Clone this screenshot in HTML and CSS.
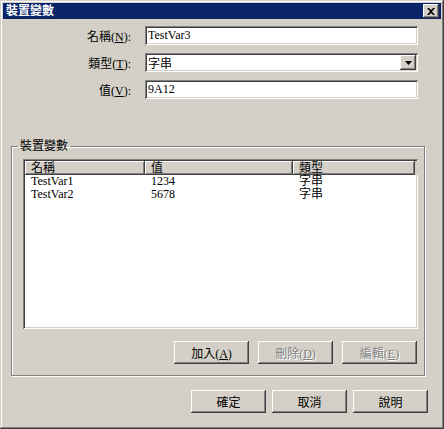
FILE: index.html
```html
<!DOCTYPE html>
<html lang="zh-Hant">
<head>
    <meta charset="UTF-8">
    <title>裝置變數</title>
    <link rel="stylesheet" href="styles.css">
</head>
<body>

    <div class="window">
        <!-- Title bar -->
        <div class="titlebar">
            <span class="title">裝置變數</span>
            <span class="close-btn">
                <svg width="8" height="7" viewBox="0 0 8 7">
                    <path d="M0 0h2l2 2 2-2h2L5 3.5 8 7H6L4 5 2 7H0l3-3.5z" fill="#000"/>
                </svg>
            </span>
        </div>

        <!-- Input fields -->
        <div class="form">
            <label class="field-label">名稱(<u>N</u>):</label>
            <input class="textbox" type="text" value="TestVar3">

            <label class="field-label">類型(<u>T</u>):</label>
            <div class="combo">
                <span class="combo-text">字串</span>
                <span class="combo-btn">
                    <svg width="7" height="4" viewBox="0 0 7 4">
                        <path d="M0 0h7L3.5 4z" fill="#000"/>
                    </svg>
                </span>
            </div>

            <label class="field-label">值(<u>V</u>):</label>
            <input class="textbox" type="text" value="9A12">
        </div>

        <!-- Variable list -->
        <fieldset class="group">
            <legend>裝置變數</legend>
            <div class="listview">
                <div class="lv-header">
                    <span>名稱</span>
                    <span>值</span>
                    <span>類型</span>
                    <span class="lv-filler"></span>
                </div>
                <div class="lv-row">
                    <span>TestVar1</span>
                    <span>1234</span>
                    <span>字串</span>
                </div>
                <div class="lv-row">
                    <span>TestVar2</span>
                    <span>5678</span>
                    <span>字串</span>
                </div>
            </div>
            <div class="group-buttons">
                <button class="btn">加入(<u>A</u>)</button>
                <button class="btn" disabled>刪除(<u>D</u>)</button>
                <button class="btn" disabled>編輯(<u>E</u>)</button>
            </div>
        </fieldset>

        <!-- Dialog buttons -->
        <div class="dialog-buttons">
            <button class="btn">確定</button>
            <button class="btn">取消</button>
            <button class="btn">說明</button>
        </div>
    </div>

</body>
</html>
```

FILE: styles.css
```css
/* Reset */
* {
    box-sizing: border-box;
}

body {
    margin: 0;
    background: #d4d0c8;
    font: 12px "Liberation Serif", "Noto Sans CJK TC", serif;
    color: #000;
}

u {
    text-decoration: underline;
}

/* Window frame */
.window {
    width: 444px;
    height: 429px;
    padding: 3px;
    background: #d4d0c8;
    box-shadow: inset -1px -1px #404040, inset 1px 1px #d4d0c8,
                inset -2px -2px #808080, inset 2px 2px #fff;
    display: flex;
    flex-direction: column;
}

/* Title bar */
.titlebar {
    height: 16px;
    background: #0a246a;
    color: #fff;
    font-weight: bold;
    display: flex;
    align-items: center;
    justify-content: space-between;
    padding: 0 2px 0 3px;
}

.title {
    line-height: 16px;
}

.close-btn {
    width: 16px;
    height: 14px;
    background: #d4d0c8;
    box-shadow: inset -1px -1px #404040, inset 1px 1px #fff,
                inset -2px -2px #808080;
    display: flex;
    align-items: center;
    justify-content: center;
}

/* Form */
.form {
    display: grid;
    grid-template-columns: 128px 273px;
    column-gap: 14px;
    row-gap: 8px;
    margin-top: 7px;
    align-items: center;
}

.field-label {
    text-align: right;
}

.textbox,
.combo {
    height: 19px;
    background: #fff;
    border: none;
    box-shadow: inset 1px 1px #808080, inset -1px -1px #fff,
                inset 2px 2px #404040, inset -2px -2px #d4d0c8;
}

.textbox {
    font: inherit;
    padding: 2px 3px;
    outline: none;
}

.combo {
    display: flex;
    align-items: center;
    padding: 2px;
}

.combo-text {
    flex: 1;
    padding-left: 1px;
}

.combo-btn {
    width: 16px;
    height: 15px;
    background: #d4d0c8;
    box-shadow: inset -1px -1px #404040, inset 1px 1px #fff,
                inset -2px -2px #808080;
    display: flex;
    align-items: center;
    justify-content: center;
}

/* Group box */
.group {
    margin: 40px 16px 0 8px;
    border: 1px solid #808080;
    box-shadow: inset 1px 1px #fff, 1px 1px #fff;
    padding: 0 6px 11px 11px;
    min-width: 0;
}

.group legend {
    padding: 0 2px;
    margin-left: -5px;
    line-height: 14px;
}

/* List view */
.listview {
    height: 170px;
    margin-top: 6px;
    padding: 2px;
    background: #fff;
    box-shadow: inset 1px 1px #808080, inset -1px -1px #fff,
                inset 2px 2px #404040, inset -2px -2px #d4d0c8;
}

.lv-header,
.lv-row {
    display: grid;
    grid-template-columns: 120px 148px 122px 1fr;
}

.lv-header span {
    height: 14px;
    line-height: 14px;
    padding-left: 6px;
    background: #d4d0c8;
    box-shadow: inset -1px -1px #404040, inset 1px 1px #fff,
                inset -2px -2px #808080;
}

.lv-header .lv-filler {
    box-shadow: none;
}

.lv-row span {
    height: 13px;
    line-height: 13px;
    padding-left: 6px;
}

/* Buttons */
.group-buttons {
    display: flex;
    justify-content: flex-end;
    gap: 9px;
    margin-top: 12px;
    padding-right: 1px;
}

.dialog-buttons {
    display: flex;
    justify-content: flex-end;
    gap: 6px;
    margin-top: 14px;
    padding-right: 13px;
}

.btn {
    width: 75px;
    height: 23px;
    font: inherit;
    color: #000;
    background: #d4d0c8;
    border: none;
    padding: 0;
    box-shadow: inset -1px -1px #404040, inset 1px 1px #fff,
                inset -2px -2px #808080;
}

.btn:disabled {
    color: #808080;
    text-shadow: 1px 1px #fff;
}
```
